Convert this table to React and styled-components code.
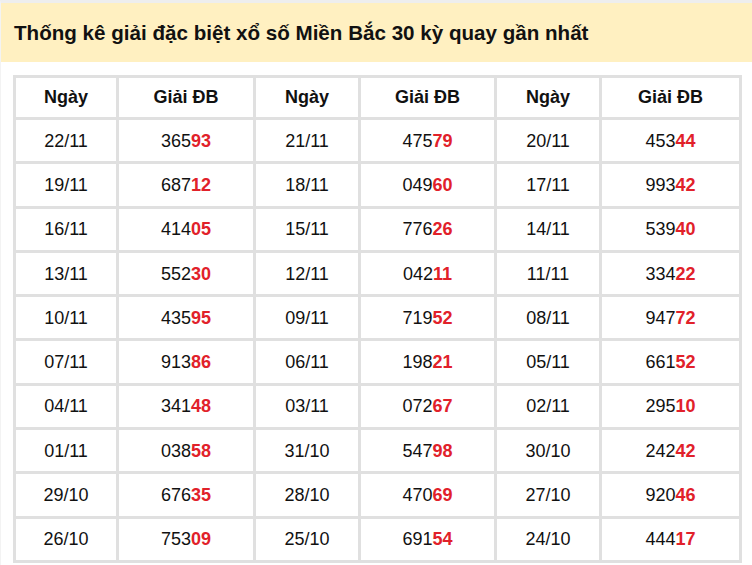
import styled, { createGlobalStyle } from "styled-components";

const GlobalStyle = createGlobalStyle`
  html, body {
    margin: 0;
    padding: 0;
    background: #ffffff;
    font-family: "Liberation Sans", Arial, sans-serif;
  }
`;

const Page = styled.div`
  width: 752px;
  height: 565px;
  overflow: hidden;
  border-top: 3px solid #eeeeee;
  border-left: 1px solid #f3f3f3;
  box-sizing: border-box;
  background: #ffffff;
`;

const TitleBar = styled.div`
  height: 59px;
  display: flex;
  align-items: center;
  padding-left: 13px;
  background: #fff0c1;
  font-size: 20.6px;
  font-weight: bold;
  color: #111111;
`;

const Table = styled.div`
  margin: 13px 0 0 12px;
  width: 729px;
  box-sizing: border-box;
  display: grid;
  grid-template-columns: 100px 134px 102px 133px 102px 137px;
  grid-template-rows: 39px repeat(10, 41.3px);
  gap: 3px;
  border: 3px solid #e0e0e0;
  background: #e0e0e0;
`;

const Cell = styled.div`
  background: #ffffff;
  display: flex;
  align-items: center;
  justify-content: center;
  font-size: 18px;
  color: #111111;
  font-weight: ${(p) => (p.$head ? "bold" : "normal")};
  padding-top: ${(p) => (p.$head ? "0" : "1px")};
  box-sizing: border-box;
`;

const Tail = styled.span`
  color: #e1212a;
  font-weight: bold;
`;

const rows = [
  ["22/11", "36593", "21/11", "47579", "20/11", "45344"],
  ["19/11", "68712", "18/11", "04960", "17/11", "99342"],
  ["16/11", "41405", "15/11", "77626", "14/11", "53940"],
  ["13/11", "55230", "12/11", "04211", "11/11", "33422"],
  ["10/11", "43595", "09/11", "71952", "08/11", "94772"],
  ["07/11", "91386", "06/11", "19821", "05/11", "66152"],
  ["04/11", "34148", "03/11", "07267", "02/11", "29510"],
  ["01/11", "03858", "31/10", "54798", "30/10", "24242"],
  ["29/10", "67635", "28/10", "47069", "27/10", "92046"],
  ["26/10", "75309", "25/10", "69154", "24/10", "44417"],
];

const heads = ["Ngày", "Giải ĐB", "Ngày", "Giải ĐB", "Ngày", "Giải ĐB"];

function Prize({ value }) {
  return (
    <>
      {value.slice(0, 3)}
      <Tail>{value.slice(3)}</Tail>
    </>
  );
}

export default function App() {
  return (
    <>
      <GlobalStyle />
      <Page>
        <TitleBar>Thống kê giải đặc biệt xổ số Miền Bắc 30 kỳ quay gần nhất</TitleBar>
        <Table>
          {heads.map((h, i) => (
            <Cell key={"h" + i} $head>
              {h}
            </Cell>
          ))}
          {rows.map((r, ri) =>
            r.map((v, ci) => (
              <Cell key={ri + "-" + ci}>
                {ci % 2 === 1 ? <Prize value={v} /> : v}
              </Cell>
            ))
          )}
        </Table>
      </Page>
    </>
  );
}
